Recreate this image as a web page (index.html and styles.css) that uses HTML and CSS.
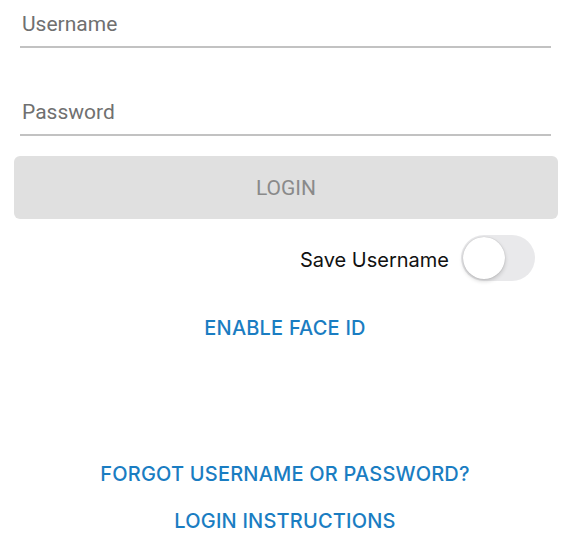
FILE: index.html
```html
<!DOCTYPE html>
<html lang="en">
<head>
<meta charset="utf-8">
<title>Login</title>
<link rel="stylesheet" href="styles.css">
</head>
<body>
<main class="screen">
  <div class="field"><span class="placeholder">Username</span></div>
  <div class="field field-second"><span class="placeholder">Password</span></div>
  <button class="login-btn" type="button">LOGIN</button>
  <div class="save-row">
    <span class="save-label">Save Username</span>
    <span class="toggle"><span class="knob"></span></span>
  </div>
  <a class="link link-face">ENABLE FACE ID</a>
  <a class="link link-forgot">FORGOT USERNAME OR PASSWORD?</a>
  <a class="link link-instr">LOGIN INSTRUCTIONS</a>
</main>
</body>
</html>
```
FILE: styles.css
```css
html, body {
  margin: 0;
  padding: 0;
  background: #ffffff;
}

.screen {
  display: flex;
  flex-direction: column;
  width: 570px;
  height: 538px;
  overflow: hidden;
}

.field {
  margin: 0 19px 0 20px;
  padding: 12px 0 10px 2px;
  border-bottom: 2px solid #c2c2c2;
  font-family: Roboto, "Liberation Sans", sans-serif;
  font-size: 21px;
  line-height: 24px;
  color: #707070;
}

.field-second {
  margin-top: 40px;
}

.login-btn {
  margin: 20px 12px 0 14px;
  height: 63px;
  border: none;
  border-radius: 6px;
  background: #e0e0e0;
  font-family: Roboto, "Liberation Sans", sans-serif;
  font-size: 21px;
  color: #8a8a8a;
  padding: 0;
}

.save-row {
  display: flex;
  justify-content: flex-end;
  align-items: center;
  gap: 12px;
  margin-top: 16px;
  padding-right: 35px;
  font-family: Inter, "Noto Sans", sans-serif;
  font-size: 20px;
  line-height: 24px;
}

.save-label {
  padding-top: 4px;
  color: #111111;
}

.toggle {
  display: flex;
  align-items: center;
  width: 74px;
  height: 46px;
  padding: 0 2px;
  box-sizing: border-box;
  border-radius: 23px;
  background: #e9e9eb;
}

.knob {
  width: 42px;
  height: 42px;
  border-radius: 50%;
  background: #ffffff;
  box-shadow: 0 2px 4px rgba(0, 0, 0, 0.18), 0 0 1px rgba(0, 0, 0, 0.25);
}

.link {
  align-self: center;
  font-family: Inter, "Noto Sans", sans-serif;
  font-size: 20px;
  font-weight: 500;
  line-height: 24px;
  color: #1a7dc2;
  letter-spacing: 0.2px;
}

.link-face {
  margin-top: 35px;
}

.link-forgot {
  margin-top: 122px;
}

.link-instr {
  margin-top: 23px;
}
```
